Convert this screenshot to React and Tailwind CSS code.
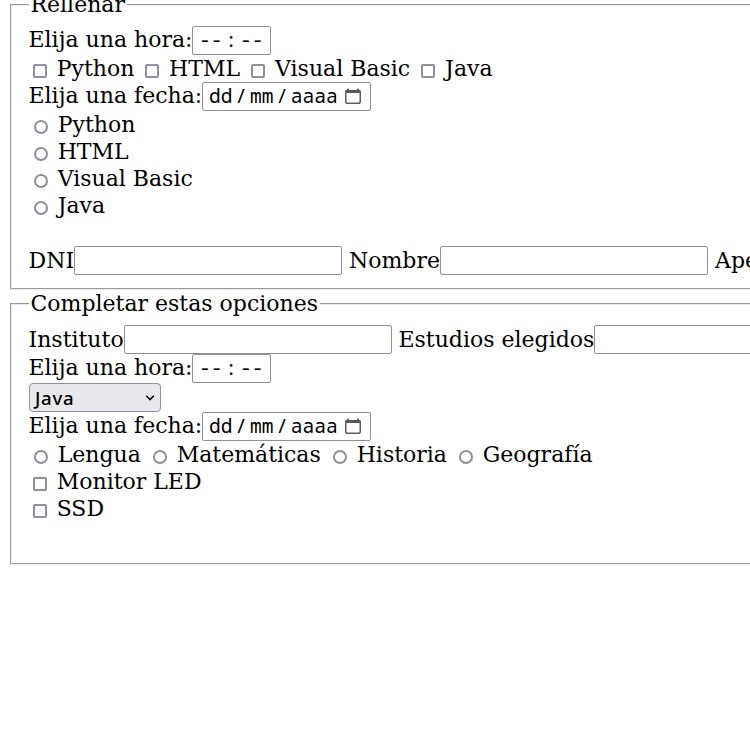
import React from 'react';

function Panel({ legend, legendWidth, className, children }) {
  return (
    <section className={`relative ml-[10px] w-[1100px] border-l border-t border-b border-l-[#9a9a9a] border-t-[#9a9a9a] border-b-[#ececec] ${className}`}>
      <div className="h-full border-l border-t border-b border-l-[#ececec] border-t-[#ececec] border-b-[#9a9a9a] pl-[17px] pt-5">
        {children}
      </div>
      <h2 className={`absolute left-[18px] -top-[14px] bg-white pl-[1.5px] leading-[27px] ${legendWidth}`}>{legend}</h2>
    </section>
  );
}

function Row({ tall, children }) {
  return <div className={`flex items-start ${tall ? 'h-[29px]' : 'h-[27px]'}`}>{children}</div>;
}

function Label({ width, low, children }) {
  return (
    <span className={`shrink-0 ${low ? 'pt-px' : ''} ${width}`}>
      <span className="-ml-[0.5px]">{children}</span>
    </span>
  );
}

const box = 'h-[29px] shrink-0 rounded-[2px] border border-[#8f8f9d] bg-white';
const mono = "flex items-center font-['Noto_Sans_Mono','DejaVu_Sans_Mono',monospace] text-[19.6px] leading-[27px]";
const monoText = 'relative -top-px';

function TimeBox() {
  return (
    <div className={`${box} ${mono} w-[79px] gap-[2.8px] pl-[6px]`}>
      <span className={monoText}>--</span><span className={monoText}>:</span><span className={monoText}>--</span>
    </div>
  );
}

function DateBox() {
  return (
    <div className={`${box} ${mono} w-[169px] gap-[2.8px] pl-[6px]`}>
      <span className={monoText}>dd</span><span className={monoText}>/</span><span className={monoText}>mm</span>
      <span className={monoText}>/</span><span className={monoText}>aaaa</span>
      <svg className="relative -top-px ml-[4px] shrink-0" width="16" height="16" viewBox="0 0 16 16" fill="none">
        <rect x="0.75" y="2.75" width="14.5" height="12.5" rx="1.8" stroke="#5f5f5f" strokeWidth="1.5" />
        <path d="M0 5V3.7Q0 2 1.7 2H2V1.2Q2 0.5 3 0.5T4 1.2V2H12V1.2Q12 0.5 13 0.5T14 1.2V2H14.3Q16 2 16 3.7V5Z" fill="#5a5a5a" />
      </svg>
    </div>
  );
}

function TextBox() {
  return <input type="text" className={`${box} w-[268px]`} />;
}

function Choice({ radio, width = '', children }) {
  return (
    <label className={`flex shrink-0 items-start ${width}`}>
      <span
        className={`mt-[9px] mr-[9.7px] h-[14px] w-[14px] shrink-0 border-2 border-[#8f8f9d] ${
          radio ? 'ml-[5px] rounded-full' : 'ml-1 rounded-[2px]'
        }`}
      />
      {children}
    </label>
  );
}

export default function App() {
  return (
    <main className="h-[750px] w-full overflow-hidden whitespace-nowrap bg-white pt-1 font-['DejaVu_Serif',serif] text-[22px] leading-[27px] text-black">
      <Panel legend="Rellenar" legendWidth="w-[98px]" className="h-[286px]">
        <Row tall><Label width="w-[163px]">Elija una hora:</Label><TimeBox /></Row>
        <Row>
          <Choice width="w-[112.4px]">Python</Choice>
          <Choice width="w-[106px]">HTML</Choice>
          <Choice width="w-[170px]">Visual Basic</Choice>
          <Choice>Java</Choice>
        </Row>
        <Row tall><Label width="w-[173px]">Elija una fecha:</Label><DateBox /></Row>
        <Row><Choice radio>Python</Choice></Row>
        <Row><Choice radio>HTML</Choice></Row>
        <Row><Choice radio>Visual Basic</Choice></Row>
        <Row><Choice radio>Java</Choice></Row>
        <Row />
        <Row tall>
          <Label low width="w-[45px]">DNI</Label><TextBox />
          <Label low width="ml-[7.5px] w-[90.5px]">Nombre</Label><TextBox />
          <Label low width="ml-[7.5px] w-[100px]">Apellidos</Label><TextBox />
        </Row>
      </Panel>
      <Panel legend="Completar estas opciones" legendWidth="w-[291px]" className="mt-[13px] h-[262px]">
        <Row tall>
          <Label low width="w-[95px]">Instituto</Label><TextBox />
          <Label low width="ml-[7px] w-[195px]">Estudios elegidos</Label><TextBox />
        </Row>
        <Row tall><Label width="w-[163px]">Elija una hora:</Label><TimeBox /></Row>
        <Row tall>
          <div className="flex h-[29px] w-[132px] items-center justify-between rounded-[4px] border border-[#8f8f9d] bg-[#e9e9ed] pl-[5px] pr-[5px] font-['Noto_Sans',sans-serif] text-[18.6px] font-medium tracking-[0.7px]">
            <span>Java</span>
            <svg width="10" height="8" viewBox="0 0 10 8" fill="none">
              <path d="M1.2 1.8L5 5.6L8.8 1.8" stroke="#000" strokeWidth="1.5" />
            </svg>
          </div>
        </Row>
        <Row tall><Label width="w-[173px]">Elija una fecha:</Label><DateBox /></Row>
        <Row>
          <Choice radio width="w-[119px]">Lengua</Choice>
          <Choice radio width="w-[180px]">Matemáticas</Choice>
          <Choice radio width="w-[126px]">Historia</Choice>
          <Choice radio>Geografía</Choice>
        </Row>
        <Row><Choice>Monitor LED</Choice></Row>
        <Row><Choice>SSD</Choice></Row>
      </Panel>
    </main>
  );
}
